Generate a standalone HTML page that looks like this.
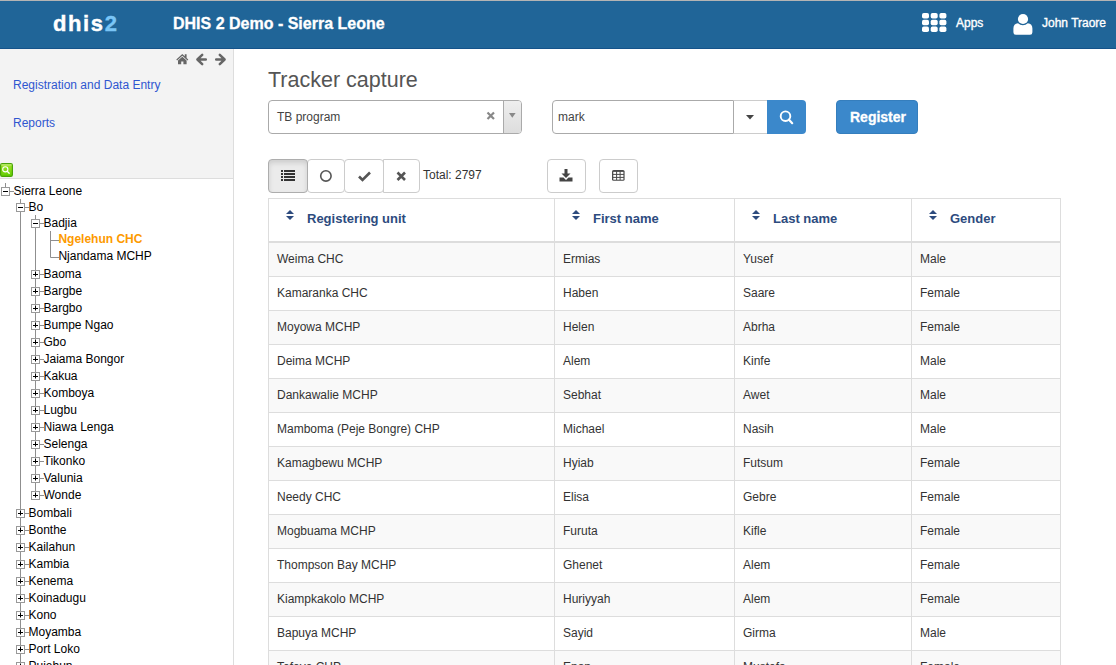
<!DOCTYPE html>
<html><head><meta charset="utf-8">
<style>
*{box-sizing:border-box}
html,body{margin:0;padding:0;width:1116px;height:665px;overflow:hidden;background:#fff;font-family:"Liberation Sans",sans-serif;}
.abs{position:absolute}
#topline{position:absolute;left:0;top:0;width:1116px;height:1px;background:#b4b4b4}
#header{position:absolute;left:0;top:1px;width:1116px;height:48px;background:#206598;border-bottom:1px solid #15538a}
#logo{position:absolute;left:53px;top:10px;font-weight:bold;font-size:22px;color:#fff;letter-spacing:1.6px;-webkit-text-stroke:0.4px #fff}
#logo span{-webkit-text-stroke:0.4px #7ac5f6}
#logo span{color:#7ac5f6}
#title{position:absolute;left:173px;top:14px;-webkit-text-stroke:0.3px #fff;font-weight:bold;font-size:16px;color:#fff;white-space:nowrap}
.hdtxt{position:absolute;top:15px;font-size:12px;color:#fff;white-space:nowrap;-webkit-text-stroke:0.35px #fff}
#sidebar{position:absolute;left:0;top:49px;width:234px;height:616px;background:#fff;border-right:1px solid #ddd}
#sidetop{position:absolute;left:0;top:0;width:233px;height:130px;background:#f3f3f3;border-bottom:1px solid #ddd}
.navlink{position:absolute;left:13px;font-size:12px;color:#2f56d0;white-space:nowrap}
.tl{position:absolute;font-size:12px;line-height:16px;height:16px;color:#000;white-space:nowrap}
.tl.sel{color:#fd9a00;font-weight:bold}
#treesvg line{stroke:#8f8f8f;stroke-width:1}
#treesvg rect{stroke:#999;stroke-width:1}
#treesvg line.s{stroke:#000}
h2{position:absolute;left:268px;top:68px;margin:0;font-weight:normal;font-size:21.5px;color:#555;white-space:nowrap}
.sel2{position:absolute;left:268px;top:100px;width:254px;height:34px;border:1px solid #aaa;border-radius:4px;background:#fff}
.btn{position:absolute;top:159px;height:34px;border:1px solid #ccc;border-radius:4px;background:#fff}
.btn.active{background:#ebebeb;border-color:#adadad;box-shadow:inset 0 3px 5px rgba(0,0,0,.125)}
#table{position:absolute;left:268px;top:198px;width:793px;height:480px;border:1px solid #ddd;border-bottom:none;overflow:hidden}
.th{position:absolute;top:0;height:44px;border-bottom:2px solid #ddd;width:791px;left:0}
.thc{position:absolute;top:12px;font-weight:bold;font-size:13px;color:#2d4b7e;white-space:nowrap}
.tr{position:absolute;left:0;width:791px;height:34px;border-bottom:1px solid #ddd}
.td{position:absolute;top:9px;font-size:12px;color:#333;white-space:nowrap}
.vl{position:absolute;top:0;width:1px;height:480px;background:#ddd}
</style></head><body>
<div id="topline"></div>
<div id="header">
  <div id="logo">dhis<span>2</span></div>
  <div id="title">DHIS 2 Demo - Sierra Leone</div>
  <svg class="abs" style="left:922px;top:12px" width="25" height="20" viewBox="0 0 25 20" fill="#fff">
    <rect x="0" y="0" width="7" height="5.5" rx="1.8"/><rect x="8.7" y="0" width="7" height="5.5" rx="1.8"/><rect x="17.4" y="0" width="7" height="5.5" rx="1.8"/>
    <rect x="0" y="6.8" width="7" height="5.5" rx="1.8"/><rect x="8.7" y="6.8" width="7" height="5.5" rx="1.8"/><rect x="17.4" y="6.8" width="7" height="5.5" rx="1.8"/>
    <rect x="0" y="13.6" width="7" height="5.5" rx="1.8"/><rect x="8.7" y="13.6" width="7" height="5.5" rx="1.8"/><rect x="17.4" y="13.6" width="7" height="5.5" rx="1.8"/>
  </svg>
  <div class="hdtxt" style="left:956px">Apps</div>
  <svg class="abs" style="left:1013px;top:12px" width="20" height="22" viewBox="0 0 20 22" fill="#fff">
    <circle cx="10" cy="6" r="5.1"/>
    <path d="M0.4 19.2 L0.4 15.5 Q0.4 10.6 5 10.2 Q7.2 12.3 9.9 12.3 Q12.6 12.3 14.8 10.2 Q19.4 10.6 19.4 15.5 L19.4 19.2 Q19.4 21.7 17 21.7 L2.8 21.7 Q0.4 21.7 0.4 19.2 Z"/>
  </svg>
  <div class="hdtxt" style="left:1042px">John Traore</div>
</div>

<div id="sidebar">
  <div id="sidetop">
    <svg class="abs" style="left:170px;top:-1px" width="64" height="24" viewBox="0 0 64 24">
      <g fill="#666">
      <path d="M6.3 11.6 L12.3 6 L14.8 8.3 L14.8 6.3 L16.6 6.3 L16.6 10 L18.3 11.6 L17.5 12.5 L12.3 7.7 L7.1 12.5 Z"/>
      <path d="M8 12.6 L12.3 8.8 L16.6 12.6 L16.6 16.2 L13.4 16.2 L13.4 13.4 L11.2 13.4 L11.2 16.2 L8 16.2 Z"/>
      </g>
      <g fill="none" stroke="#666" stroke-width="2.5" stroke-linecap="round" stroke-linejoin="round">
      <path d="M32.2 6.9 L27.4 11.5 L32.2 16.1 M27.6 11.5 L35.8 11.5"/>
      <path d="M49.8 6.9 L54.6 11.5 L49.8 16.1 M54.4 11.5 L46.2 11.5"/>
      </g>
    </svg>
    <div class="navlink" style="top:29px">Registration and Data Entry</div>
    <div class="navlink" style="top:67px">Reports</div>
    <svg class="abs" style="left:0;top:114px" width="14" height="14" viewBox="0 0 14 14">
      <defs><linearGradient id="gg" x1="0" y1="0" x2="0" y2="1"><stop offset="0" stop-color="#a6e62c"/><stop offset="1" stop-color="#60cc02"/></linearGradient></defs>
      <rect x="0.6" y="0.6" width="11.8" height="12.8" rx="1.6" fill="url(#gg)" stroke="#4aa508" stroke-width="1.2"/>
      <line x1="1.2" y1="1.9" x2="11.6" y2="1.9" stroke="#d8f5a8" stroke-width="0.8"/>
      <circle cx="5.3" cy="6.3" r="2.6" fill="none" stroke="#fff" stroke-width="1.1"/>
      <line x1="7.2" y1="8.2" x2="9.2" y2="10.3" stroke="#fff" stroke-width="1.3" stroke-linecap="round"/>
    </svg>
  </div>
</div>
<svg id="treesvg" class="abs" style="left:0;top:0" width="233" height="665">
<line x1="5.5" y1="183" x2="5.5" y2="187"/>
<line x1="20.5" y1="199" x2="20.5" y2="700"/>
<line x1="35.5" y1="215" x2="35.5" y2="495.5"/>
<line x1="50.5" y1="231" x2="50.5" y2="257.5"/>
<rect x="1.5" y="187.5" width="8" height="8" fill="#fff"/>
<line x1="10" y1="191.5" x2="14" y2="191.5"/>
<line class="s" x1="3" y1="191.5" x2="8" y2="191.5"/>
<rect x="16.5" y="203.5" width="8" height="8" fill="#fff"/>
<line x1="25" y1="207.5" x2="29" y2="207.5"/>
<line class="s" x1="18" y1="207.5" x2="23" y2="207.5"/>
<rect x="31.5" y="219.5" width="8" height="8" fill="#fff"/>
<line x1="40" y1="223.5" x2="44" y2="223.5"/>
<line class="s" x1="33" y1="223.5" x2="38" y2="223.5"/>
<line x1="50.5" y1="240.5" x2="59" y2="240.5"/>
<line x1="50.5" y1="257.5" x2="59" y2="257.5"/>
<rect x="31.5" y="270.5" width="8" height="8" fill="#fff"/>
<line x1="40" y1="274.5" x2="44" y2="274.5"/>
<line class="s" x1="33" y1="274.5" x2="38" y2="274.5"/>
<line class="s" x1="35.5" y1="271.5" x2="35.5" y2="276.5"/>
<rect x="31.5" y="287.5" width="8" height="8" fill="#fff"/>
<line x1="40" y1="291.5" x2="44" y2="291.5"/>
<line class="s" x1="33" y1="291.5" x2="38" y2="291.5"/>
<line class="s" x1="35.5" y1="288.5" x2="35.5" y2="293.5"/>
<rect x="31.5" y="304.5" width="8" height="8" fill="#fff"/>
<line x1="40" y1="308.5" x2="44" y2="308.5"/>
<line class="s" x1="33" y1="308.5" x2="38" y2="308.5"/>
<line class="s" x1="35.5" y1="305.5" x2="35.5" y2="310.5"/>
<rect x="31.5" y="321.5" width="8" height="8" fill="#fff"/>
<line x1="40" y1="325.5" x2="44" y2="325.5"/>
<line class="s" x1="33" y1="325.5" x2="38" y2="325.5"/>
<line class="s" x1="35.5" y1="322.5" x2="35.5" y2="327.5"/>
<rect x="31.5" y="338.5" width="8" height="8" fill="#fff"/>
<line x1="40" y1="342.5" x2="44" y2="342.5"/>
<line class="s" x1="33" y1="342.5" x2="38" y2="342.5"/>
<line class="s" x1="35.5" y1="339.5" x2="35.5" y2="344.5"/>
<rect x="31.5" y="355.5" width="8" height="8" fill="#fff"/>
<line x1="40" y1="359.5" x2="44" y2="359.5"/>
<line class="s" x1="33" y1="359.5" x2="38" y2="359.5"/>
<line class="s" x1="35.5" y1="356.5" x2="35.5" y2="361.5"/>
<rect x="31.5" y="372.5" width="8" height="8" fill="#fff"/>
<line x1="40" y1="376.5" x2="44" y2="376.5"/>
<line class="s" x1="33" y1="376.5" x2="38" y2="376.5"/>
<line class="s" x1="35.5" y1="373.5" x2="35.5" y2="378.5"/>
<rect x="31.5" y="389.5" width="8" height="8" fill="#fff"/>
<line x1="40" y1="393.5" x2="44" y2="393.5"/>
<line class="s" x1="33" y1="393.5" x2="38" y2="393.5"/>
<line class="s" x1="35.5" y1="390.5" x2="35.5" y2="395.5"/>
<rect x="31.5" y="406.5" width="8" height="8" fill="#fff"/>
<line x1="40" y1="410.5" x2="44" y2="410.5"/>
<line class="s" x1="33" y1="410.5" x2="38" y2="410.5"/>
<line class="s" x1="35.5" y1="407.5" x2="35.5" y2="412.5"/>
<rect x="31.5" y="423.5" width="8" height="8" fill="#fff"/>
<line x1="40" y1="427.5" x2="44" y2="427.5"/>
<line class="s" x1="33" y1="427.5" x2="38" y2="427.5"/>
<line class="s" x1="35.5" y1="424.5" x2="35.5" y2="429.5"/>
<rect x="31.5" y="440.5" width="8" height="8" fill="#fff"/>
<line x1="40" y1="444.5" x2="44" y2="444.5"/>
<line class="s" x1="33" y1="444.5" x2="38" y2="444.5"/>
<line class="s" x1="35.5" y1="441.5" x2="35.5" y2="446.5"/>
<rect x="31.5" y="457.5" width="8" height="8" fill="#fff"/>
<line x1="40" y1="461.5" x2="44" y2="461.5"/>
<line class="s" x1="33" y1="461.5" x2="38" y2="461.5"/>
<line class="s" x1="35.5" y1="458.5" x2="35.5" y2="463.5"/>
<rect x="31.5" y="474.5" width="8" height="8" fill="#fff"/>
<line x1="40" y1="478.5" x2="44" y2="478.5"/>
<line class="s" x1="33" y1="478.5" x2="38" y2="478.5"/>
<line class="s" x1="35.5" y1="475.5" x2="35.5" y2="480.5"/>
<rect x="31.5" y="491.5" width="8" height="8" fill="#fff"/>
<line x1="40" y1="495.5" x2="44" y2="495.5"/>
<line class="s" x1="33" y1="495.5" x2="38" y2="495.5"/>
<line class="s" x1="35.5" y1="492.5" x2="35.5" y2="497.5"/>
<rect x="16.5" y="509.5" width="8" height="8" fill="#fff"/>
<line x1="25" y1="513.5" x2="29" y2="513.5"/>
<line class="s" x1="18" y1="513.5" x2="23" y2="513.5"/>
<line class="s" x1="20.5" y1="510.5" x2="20.5" y2="515.5"/>
<rect x="16.5" y="526.5" width="8" height="8" fill="#fff"/>
<line x1="25" y1="530.5" x2="29" y2="530.5"/>
<line class="s" x1="18" y1="530.5" x2="23" y2="530.5"/>
<line class="s" x1="20.5" y1="527.5" x2="20.5" y2="532.5"/>
<rect x="16.5" y="543.5" width="8" height="8" fill="#fff"/>
<line x1="25" y1="547.5" x2="29" y2="547.5"/>
<line class="s" x1="18" y1="547.5" x2="23" y2="547.5"/>
<line class="s" x1="20.5" y1="544.5" x2="20.5" y2="549.5"/>
<rect x="16.5" y="560.5" width="8" height="8" fill="#fff"/>
<line x1="25" y1="564.5" x2="29" y2="564.5"/>
<line class="s" x1="18" y1="564.5" x2="23" y2="564.5"/>
<line class="s" x1="20.5" y1="561.5" x2="20.5" y2="566.5"/>
<rect x="16.5" y="577.5" width="8" height="8" fill="#fff"/>
<line x1="25" y1="581.5" x2="29" y2="581.5"/>
<line class="s" x1="18" y1="581.5" x2="23" y2="581.5"/>
<line class="s" x1="20.5" y1="578.5" x2="20.5" y2="583.5"/>
<rect x="16.5" y="594.5" width="8" height="8" fill="#fff"/>
<line x1="25" y1="598.5" x2="29" y2="598.5"/>
<line class="s" x1="18" y1="598.5" x2="23" y2="598.5"/>
<line class="s" x1="20.5" y1="595.5" x2="20.5" y2="600.5"/>
<rect x="16.5" y="611.5" width="8" height="8" fill="#fff"/>
<line x1="25" y1="615.5" x2="29" y2="615.5"/>
<line class="s" x1="18" y1="615.5" x2="23" y2="615.5"/>
<line class="s" x1="20.5" y1="612.5" x2="20.5" y2="617.5"/>
<rect x="16.5" y="628.5" width="8" height="8" fill="#fff"/>
<line x1="25" y1="632.5" x2="29" y2="632.5"/>
<line class="s" x1="18" y1="632.5" x2="23" y2="632.5"/>
<line class="s" x1="20.5" y1="629.5" x2="20.5" y2="634.5"/>
<rect x="16.5" y="645.5" width="8" height="8" fill="#fff"/>
<line x1="25" y1="649.5" x2="29" y2="649.5"/>
<line class="s" x1="18" y1="649.5" x2="23" y2="649.5"/>
<line class="s" x1="20.5" y1="646.5" x2="20.5" y2="651.5"/>
<rect x="16.5" y="662.5" width="8" height="8" fill="#fff"/>
<line x1="25" y1="666.5" x2="29" y2="666.5"/>
<line class="s" x1="18" y1="666.5" x2="23" y2="666.5"/>
<line class="s" x1="20.5" y1="663.5" x2="20.5" y2="668.5"/>
<rect x="16.5" y="679.5" width="8" height="8" fill="#fff"/>
<line x1="25" y1="683.5" x2="29" y2="683.5"/>
<line class="s" x1="18" y1="683.5" x2="23" y2="683.5"/>
<line class="s" x1="20.5" y1="680.5" x2="20.5" y2="685.5"/>
</svg>
<div class="tl" style="left:13.5px;top:182.5px">Sierra Leone</div>
<div class="tl" style="left:28.5px;top:198.5px">Bo</div>
<div class="tl" style="left:43.5px;top:214.5px">Badjia</div>
<div class="tl sel" style="left:58.4px;top:230.5px">Ngelehun CHC</div>
<div class="tl" style="left:58.4px;top:247.5px">Njandama MCHP</div>
<div class="tl" style="left:43.5px;top:265.5px">Baoma</div>
<div class="tl" style="left:43.5px;top:282.5px">Bargbe</div>
<div class="tl" style="left:43.5px;top:299.5px">Bargbo</div>
<div class="tl" style="left:43.5px;top:316.5px">Bumpe Ngao</div>
<div class="tl" style="left:43.5px;top:333.5px">Gbo</div>
<div class="tl" style="left:43.5px;top:350.5px">Jaiama Bongor</div>
<div class="tl" style="left:43.5px;top:367.5px">Kakua</div>
<div class="tl" style="left:43.5px;top:384.5px">Komboya</div>
<div class="tl" style="left:43.5px;top:401.5px">Lugbu</div>
<div class="tl" style="left:43.5px;top:418.5px">Niawa Lenga</div>
<div class="tl" style="left:43.5px;top:435.5px">Selenga</div>
<div class="tl" style="left:43.5px;top:452.5px">Tikonko</div>
<div class="tl" style="left:43.5px;top:469.5px">Valunia</div>
<div class="tl" style="left:43.5px;top:486.5px">Wonde</div>
<div class="tl" style="left:28.5px;top:504.5px">Bombali</div>
<div class="tl" style="left:28.5px;top:521.5px">Bonthe</div>
<div class="tl" style="left:28.5px;top:538.5px">Kailahun</div>
<div class="tl" style="left:28.5px;top:555.5px">Kambia</div>
<div class="tl" style="left:28.5px;top:572.5px">Kenema</div>
<div class="tl" style="left:28.5px;top:589.5px">Koinadugu</div>
<div class="tl" style="left:28.5px;top:606.5px">Kono</div>
<div class="tl" style="left:28.5px;top:623.5px">Moyamba</div>
<div class="tl" style="left:28.5px;top:640.5px">Port Loko</div>
<div class="tl" style="left:28.5px;top:657.5px">Pujehun</div>
<div class="tl" style="left:28.5px;top:674.5px">Tonkolili</div>

<h2>Tracker capture</h2>
<div class="sel2">
  <div class="abs" style="left:8px;top:9px;font-size:12px;color:#444">TB program</div>
  <svg class="abs" style="left:216.5px;top:10px" width="10" height="10" viewBox="0 0 10 10"><path d="M1.5 1.5 L8 8 M8 1.5 L1.5 8" stroke="#888" stroke-width="2.2"/></svg>
  <div class="abs" style="left:234px;top:0;width:18px;height:32px;border-left:1px solid #aaa;background:linear-gradient(#eee,#ddd);border-radius:0 3px 3px 0"></div>
  <svg class="abs" style="left:240px;top:11.6px" width="8" height="6" viewBox="0 0 8 6"><path d="M0 0 L6.6 0 L3.3 4.8 Z" fill="#888"/></svg>
</div>

<div class="abs" style="left:552px;top:100px;width:182px;height:34px;border:1px solid #aaa;border-radius:4px 0 0 4px;background:#fff">
  <div class="abs" style="left:5px;top:9px;font-size:12px;color:#444">mark</div>
</div>
<div class="abs" style="left:734px;top:100px;width:33px;height:34px;border-top:1px solid #ccc;border-bottom:1px solid #ccc;background:#fff">
  <svg class="abs" style="left:12px;top:14px" width="9" height="6" viewBox="0 0 9 6"><path d="M0 0 L8 0 L4 4.5 Z" fill="#444"/></svg>
</div>
<div class="abs" style="left:767px;top:100px;width:39px;height:34px;background:#3b88cb;border-radius:0 4px 4px 0">
  <svg class="abs" style="left:11px;top:9px" width="16" height="17" viewBox="0 0 16 17"><circle cx="7.5" cy="7.2" r="4.8" fill="none" stroke="#fff" stroke-width="1.9"/><line x1="10.8" y1="10.6" x2="14.2" y2="14.2" stroke="#fff" stroke-width="2.2" stroke-linecap="round"/></svg>
</div>
<div class="abs" style="left:836px;top:100px;width:82px;height:34px;background:#3b88cb;border-radius:4px;border:1px solid #357ebd">
  <div class="abs" style="left:13px;top:8px;font-size:14px;font-weight:bold;color:#fff;-webkit-text-stroke:0.3px #fff">Register</div>
</div>

<div class="btn active" style="left:268px;width:40px;z-index:2">
  <svg class="abs" style="left:12px;top:10px" width="14" height="11" viewBox="0 0 14 11" fill="#333">
    <rect x="0" y="0" width="2" height="2"/><rect x="3" y="0" width="11" height="2"/>
    <rect x="0" y="3" width="2" height="2"/><rect x="3" y="3" width="11" height="2"/>
    <rect x="0" y="6" width="2" height="2"/><rect x="3" y="6" width="11" height="2"/>
    <rect x="0" y="9" width="2" height="2"/><rect x="3" y="9" width="11" height="2"/>
  </svg>
</div>
<div class="btn" style="left:307px;width:38px">
  <svg class="abs" style="left:10px;top:8px" width="14" height="14" viewBox="0 0 14 14"><circle cx="7.9" cy="7.9" r="5.2" fill="none" stroke="#555" stroke-width="1.6"/></svg>
</div>
<div class="btn" style="left:344px;width:40px">
  <svg class="abs" style="left:13px;top:11px" width="14" height="11" viewBox="0 0 14 11"><path d="M1 5.5 L4.5 9 L12 1.5" fill="none" stroke="#555" stroke-width="2.6"/></svg>
</div>
<div class="btn" style="left:383px;width:37px;border-radius:0 4px 4px 0;z-index:1">
  <svg class="abs" style="left:11.5px;top:11px" width="11" height="11" viewBox="0 0 11 11"><path d="M1.5 1.5 L9 9 M9 1.5 L1.5 9" stroke="#555" stroke-width="2.6"/></svg>
</div>
<div class="abs" style="left:423px;top:168px;font-size:12px;color:#333">Total: 2797</div>
<div class="btn" style="left:547px;width:39px">
  <svg class="abs" style="left:11px;top:9px" width="15" height="14" viewBox="0 0 15 14" fill="#444">
    <rect x="5.5" y="0" width="3" height="5"/><path d="M2.5 4.5 L11.5 4.5 L7 9 Z"/>
    <path d="M0.5 8.5 L4.5 8.5 L7 11 L9.5 8.5 L13.5 8.5 L13.5 12.5 L0.5 12.5 Z"/>
  </svg>
</div>
<div class="btn" style="left:599px;width:39px">
  <svg class="abs" style="left:12px;top:10px" width="13" height="11" viewBox="0 0 13 11">
    <rect x="0" y="0" width="12.6" height="10.8" rx="1.6" fill="#4a4a4a"/>
    <g fill="#fff"><rect x="1.3" y="1.9" width="2.8" height="2"/><rect x="5.1" y="1.9" width="2.5" height="2"/><rect x="8.6" y="1.9" width="2.8" height="2"/>
    <rect x="1.3" y="4.9" width="2.8" height="2"/><rect x="5.1" y="4.9" width="2.5" height="2"/><rect x="8.6" y="4.9" width="2.8" height="2"/>
    <rect x="1.3" y="7.9" width="2.8" height="1.8"/><rect x="5.1" y="7.9" width="2.5" height="1.8"/><rect x="8.6" y="7.9" width="2.8" height="1.8"/></g>
  </svg>
</div>

<div id="table">
  <div class="th">
    <svg class="abs" style="left:17px;top:11px" width="8" height="11" viewBox="0 0 8 11" fill="#2d4b7e"><path d="M0 4 L4 0 L8 4 Z M0 6 L8 6 L4 10 Z"/></svg>
    <div class="thc" style="left:38px">Registering unit</div>
    <svg class="abs" style="left:303px;top:11px" width="8" height="11" viewBox="0 0 8 11" fill="#2d4b7e"><path d="M0 4 L4 0 L8 4 Z M0 6 L8 6 L4 10 Z"/></svg>
    <div class="thc" style="left:324px">First name</div>
    <svg class="abs" style="left:483px;top:11px" width="8" height="11" viewBox="0 0 8 11" fill="#2d4b7e"><path d="M0 4 L4 0 L8 4 Z M0 6 L8 6 L4 10 Z"/></svg>
    <div class="thc" style="left:504px">Last name</div>
    <svg class="abs" style="left:660px;top:11px" width="8" height="11" viewBox="0 0 8 11" fill="#2d4b7e"><path d="M0 4 L4 0 L8 4 Z M0 6 L8 6 L4 10 Z"/></svg>
    <div class="thc" style="left:681px">Gender</div>
  </div>
<div class="tr" style="top:44px;background:#f9f9f9">
<div class="td" style="left:8px">Weima CHC</div>
<div class="td" style="left:294px">Ermias</div>
<div class="td" style="left:474px">Yusef</div>
<div class="td" style="left:651px">Male</div>
</div>
<div class="tr" style="top:78px;background:#fff">
<div class="td" style="left:8px">Kamaranka CHC</div>
<div class="td" style="left:294px">Haben</div>
<div class="td" style="left:474px">Saare</div>
<div class="td" style="left:651px">Female</div>
</div>
<div class="tr" style="top:112px;background:#f9f9f9">
<div class="td" style="left:8px">Moyowa MCHP</div>
<div class="td" style="left:294px">Helen</div>
<div class="td" style="left:474px">Abrha</div>
<div class="td" style="left:651px">Female</div>
</div>
<div class="tr" style="top:146px;background:#fff">
<div class="td" style="left:8px">Deima MCHP</div>
<div class="td" style="left:294px">Alem</div>
<div class="td" style="left:474px">Kinfe</div>
<div class="td" style="left:651px">Male</div>
</div>
<div class="tr" style="top:180px;background:#f9f9f9">
<div class="td" style="left:8px">Dankawalie MCHP</div>
<div class="td" style="left:294px">Sebhat</div>
<div class="td" style="left:474px">Awet</div>
<div class="td" style="left:651px">Male</div>
</div>
<div class="tr" style="top:214px;background:#fff">
<div class="td" style="left:8px">Mamboma (Peje Bongre) CHP</div>
<div class="td" style="left:294px">Michael</div>
<div class="td" style="left:474px">Nasih</div>
<div class="td" style="left:651px">Male</div>
</div>
<div class="tr" style="top:248px;background:#f9f9f9">
<div class="td" style="left:8px">Kamagbewu MCHP</div>
<div class="td" style="left:294px">Hyiab</div>
<div class="td" style="left:474px">Futsum</div>
<div class="td" style="left:651px">Female</div>
</div>
<div class="tr" style="top:282px;background:#fff">
<div class="td" style="left:8px">Needy CHC</div>
<div class="td" style="left:294px">Elisa</div>
<div class="td" style="left:474px">Gebre</div>
<div class="td" style="left:651px">Female</div>
</div>
<div class="tr" style="top:316px;background:#f9f9f9">
<div class="td" style="left:8px">Mogbuama MCHP</div>
<div class="td" style="left:294px">Furuta</div>
<div class="td" style="left:474px">Kifle</div>
<div class="td" style="left:651px">Female</div>
</div>
<div class="tr" style="top:350px;background:#fff">
<div class="td" style="left:8px">Thompson Bay MCHP</div>
<div class="td" style="left:294px">Ghenet</div>
<div class="td" style="left:474px">Alem</div>
<div class="td" style="left:651px">Female</div>
</div>
<div class="tr" style="top:384px;background:#f9f9f9">
<div class="td" style="left:8px">Kiampkakolo MCHP</div>
<div class="td" style="left:294px">Huriyyah</div>
<div class="td" style="left:474px">Alem</div>
<div class="td" style="left:651px">Female</div>
</div>
<div class="tr" style="top:418px;background:#fff">
<div class="td" style="left:8px">Bapuya MCHP</div>
<div class="td" style="left:294px">Sayid</div>
<div class="td" style="left:474px">Girma</div>
<div class="td" style="left:651px">Male</div>
</div>
<div class="tr" style="top:452px;background:#f9f9f9">
<div class="td" style="left:8px">Tefeye CHP</div>
<div class="td" style="left:294px">Enan</div>
<div class="td" style="left:474px">Mustefa</div>
<div class="td" style="left:651px">Female</div>
</div>
  <div class="vl" style="left:285px"></div>
  <div class="vl" style="left:465px"></div>
  <div class="vl" style="left:642px"></div>
</div>
</body></html>
